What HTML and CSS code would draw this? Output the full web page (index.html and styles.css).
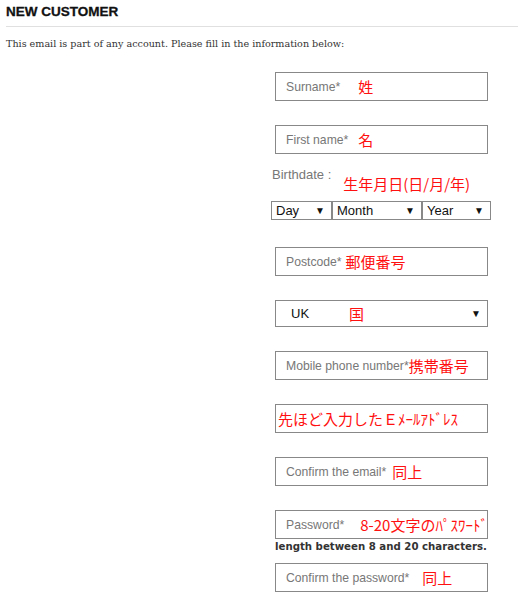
FILE: index.html
```html
<!DOCTYPE html>
<html lang="en">
<head>
<meta charset="utf-8">
<title>New customer</title>
<link rel="stylesheet" href="styles.css">
</head>
<body>
<div class="page">
  <h2 class="title">NEW CUSTOMER</h2>
  <p class="intro">This email is part of any account. Please fill in the information below:</p>
  <form class="form">
    <div class="field f-surname"><span class="ph">Surname*</span><span class="note n-surname">姓</span></div>
    <div class="field f-first"><span class="ph">First name*</span><span class="note n-first">名</span></div>
    <div class="birth-row">
      <span class="birth-label">Birthdate :</span>
      <span class="note n-birth">生年月日(日/月/年)</span>
    </div>
    <div class="date-row">
      <div class="sel sel-day"><span>Day</span><span class="arrow">▼</span></div>
      <div class="sel sel-month"><span>Month</span><span class="arrow">▼</span></div>
      <div class="sel sel-year"><span>Year</span><span class="arrow">▼</span></div>
    </div>
    <div class="field f-post"><span class="ph">Postcode*</span><span class="note n-post">郵便番号</span></div>
    <div class="country"><span class="country-val">UK</span><span class="note n-country">国</span><span class="arrow c-arrow">▼</span></div>
    <div class="field f-mobile"><span class="ph">Mobile phone number*</span><span class="note n-mobile">携帯番号</span></div>
    <div class="field f-email"><span class="note n-email">先ほど入力したＥﾒｰﾙｱﾄﾞﾚｽ</span></div>
    <div class="field f-cemail"><span class="ph">Confirm the email*</span><span class="note n-cemail">同上</span></div>
    <div class="field f-pass"><span class="ph">Password*</span><span class="note n-pass">8-20文字のﾊﾟｽﾜｰﾄﾞ</span></div>
    <p class="hint">length between 8 and 20 characters.</p>
    <div class="field f-cpass"><span class="ph">Confirm the password*</span><span class="note n-cpass">同上</span></div>
  </form>
</div>
</body>
</html>
```
FILE: styles.css
```css
html, body {
  margin: 0;
  padding: 0;
  background: #fff;
}
.page {
  padding-left: 6px;
  font-family: "Liberation Sans", Arial, sans-serif;
}
.title {
  margin: 0;
  padding: 4px 0 6px;
  font-family: "Liberation Sans", Arial, sans-serif;
  font-weight: bold;
  font-size: 13.5px;
  line-height: 16px;
  color: #111;
  -webkit-text-stroke: 0.3px #111;
  border-bottom: 1px solid #e0e0e0;
}
.intro {
  margin: 10px 0 0;
  font-family: "DejaVu Serif", Georgia, serif;
  font-size: 9.6px;
  line-height: 14px;
  color: #333;
}
.form {
  margin: 21px 0 0 269px;
  width: 213px;
  display: flex;
  flex-direction: column;
}
.field {
  box-sizing: border-box;
  height: 29px;
  border: 1px solid #888;
  display: flex;
  align-items: center;
  padding-left: 10px;
  white-space: nowrap;
  margin-top: 24px;
}
.f-surname { margin-top: 0; }
.ph {
  font-size: 12.2px;
  color: #777;
}
.note {
  font-family: "Noto Sans CJK JP", sans-serif;
  font-size: 15px;
  line-height: 20px;
  color: #ff1010;
  padding-top: 1px;
}
.n-surname { margin-left: 18px; }
.n-first { margin-left: 10px; }
.birth-row {
  display: flex;
  align-items: flex-start;
  margin: 13px 0 0 -3px;
  height: 28px;
}
.birth-label {
  font-size: 13px;
  line-height: 16px;
  color: #777;
}
.n-birth {
  margin: 7px 0 0 12px;
  padding: 0;
}
.date-row {
  display: flex;
  margin: 6px 0 0 -4px;
}
.sel {
  box-sizing: border-box;
  flex-shrink: 0;
  height: 19px;
  border: 1px solid #888;
  display: flex;
  align-items: center;
  justify-content: space-between;
  padding: 0 6px 0 4px;
  font-size: 13px;
  color: #111;
}
.sel-day { width: 61px; }
.sel-month { width: 90px; }
.sel-year { width: 69px; }
.arrow {
  font-size: 10px;
  color: #111;
}
.f-post { margin-top: 27px; }
.n-post { margin-left: 4px; }
.country {
  box-sizing: border-box;
  height: 27px;
  margin-top: 24px;
  border: 1px solid #888;
  display: flex;
  align-items: center;
  padding: 0 6px 0 15px;
  font-size: 13px;
  color: #111;
}
.n-country { margin-left: 40px; }
.c-arrow { margin-left: auto; }
.n-mobile { margin-left: 0; }
.f-email { padding-left: 2px; }
.n-cemail { margin-left: 6px; }
.n-pass { margin-left: 16px; }
.hint {
  margin: 1px 0 0;
  font-family: "DejaVu Sans", sans-serif;
  font-weight: bold;
  font-size: 10.2px;
  line-height: 14px;
  color: #333;
  white-space: nowrap;
}
.f-cpass { margin-top: 9px; }
.n-cpass { margin-left: 13px; }
```
